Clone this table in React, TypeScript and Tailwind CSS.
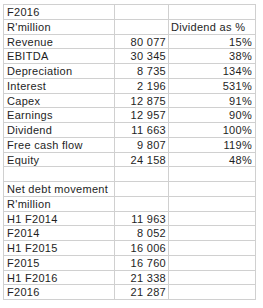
import React from "react";

type Row = { label: string; value?: string; pct?: string };

const ROWS: Row[] = [
  { label: "F2016" },
  { label: "R'million", pct: "Dividend as %" },
  { label: "Revenue", value: "80 077", pct: "15%" },
  { label: "EBITDA", value: "30 345", pct: "38%" },
  { label: "Depreciation", value: "8 735", pct: "134%" },
  { label: "Interest", value: "2 196", pct: "531%" },
  { label: "Capex", value: "12 875", pct: "91%" },
  { label: "Earnings", value: "12 957", pct: "90%" },
  { label: "Dividend", value: "11 663", pct: "100%" },
  { label: "Free cash flow", value: "9 807", pct: "119%" },
  { label: "Equity", value: "24 158", pct: "48%" },
  { label: "" },
  { label: "Net debt movement" },
  { label: "R'million" },
  { label: "H1 F2014", value: "11 963" },
  { label: "F2014", value: "8 052" },
  { label: "H1 F2015", value: "16 006" },
  { label: "F2015", value: "16 760" },
  { label: "H1 F2016", value: "21 338" },
  { label: "F2016", value: "21 287" },
];

export default function App() {
  return (
    <div className="w-[263px] h-[308px] bg-white pt-[4px] pl-[3px] font-['Liberation_Sans',Arial,sans-serif] text-[11px] tracking-[0.3px] text-[#1e1e1e]">
      <div className="w-[253px] border-t border-l border-[#d0d0d0]">
        {ROWS.map((row, i) => (
          <div
            key={i}
            className={`grid grid-cols-[111px_54px_87px] border-b border-[#d0d0d0] ${
              i % 4 === 2 ? "h-[14px]" : "h-[15px]"
            }`}
          >
            <div className="border-r border-[#d0d0d0] pl-[3px] leading-[14px] whitespace-nowrap overflow-hidden">
              {row.label}
            </div>
            <div className="border-r border-[#d0d0d0] pr-[2px] text-right leading-[14px] whitespace-nowrap">
              {row.value}
            </div>
            <div
              className={`border-r border-[#d0d0d0] leading-[14px] whitespace-nowrap ${
                row.pct && row.pct.endsWith("%") && row.pct.length < 6 ? "text-right pr-[3px]" : "pl-[2px]"
              }`}
            >
              {row.pct}
            </div>
          </div>
        ))}
      </div>
    </div>
  );
}
